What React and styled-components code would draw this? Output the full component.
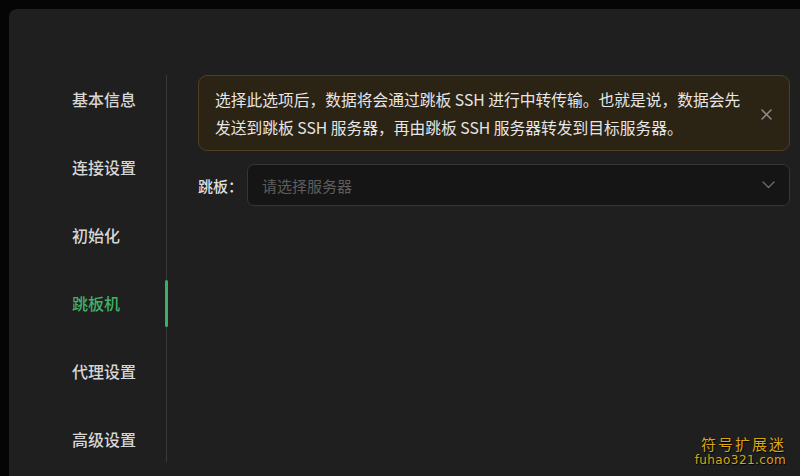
import React from "react";
import styled, { createGlobalStyle } from "styled-components";

const Global = createGlobalStyle`
  html, body { margin: 0; padding: 0; background: #050505; }
  body { font-family: "Noto Sans CJK SC", "Noto Sans", sans-serif; }
  * { box-sizing: border-box; }
`;

const Frame = styled.div`
  width: 800px;
  height: 476px;
  padding: 9px 0 0 9px;
  background: #050505;
  position: relative;
  overflow: hidden;
`;

const Panel = styled.div`
  height: 100%;
  background: #1f1f1f;
  border-top-left-radius: 8px;
  display: flex;
  align-items: flex-start;
  padding-top: 66px;
`;

const Nav = styled.nav`
  width: 158px;
  height: 387px;
  border-right: 1px solid #3a3a3a;
  display: flex;
  flex-direction: column;
  gap: 46px;
  padding: 13px 0 0 63px;
`;

const NavItem = styled.div`
  position: relative;
  height: 22px;
  line-height: 22px;
  font-size: 16px;
  font-weight: 500;
  color: ${(p) => (p.$active ? "#41b06a" : "#d6d6d6")};
  white-space: nowrap;
`;

const Indicator = styled.span`
  position: absolute;
  right: -2px;
  top: -12px;
  width: 3px;
  height: 47px;
  border-radius: 2px;
  background: #3fae68;
`;

const Content = styled.div`
  flex: 1;
  padding: 0 10px 0 31px;
  display: flex;
  flex-direction: column;
  gap: 13px;
`;

const Alert = styled.div`
  display: flex;
  align-items: center;
  background: #2b2314;
  border: 1px solid #4f3f20;
  border-radius: 9px;
  padding: 10px 14px 8px 16px;
`;

const AlertText = styled.div`
  flex: 1;
  font-size: 15.75px;
  line-height: 28px;
  color: #e6e6e6;
`;

const Line = styled.div`
  white-space: nowrap;
`;

const Close = styled.span`
  width: 18px;
  display: flex;
  justify-content: center;
  color: #8f8f8f;
  font-size: 18px;
  line-height: 1;
`;

const Row = styled.div`
  display: flex;
  align-items: center;
`;

const Label = styled.label`
  width: 49px;
  font-size: 15px;
  font-weight: 500;
  color: #dedede;
  white-space: nowrap;
`;

const Select = styled.div`
  flex: 1;
  height: 42px;
  background: #151515;
  border: 1px solid #363636;
  border-radius: 7px;
  display: flex;
  align-items: center;
  justify-content: space-between;
  padding: 0 14px 0 14px;
`;

const Placeholder = styled.span`
  font-size: 15px;
  color: #5e5e5e;
`;

const Watermark = styled.div`
  position: absolute;
  right: 14px;
  bottom: 8px;
  display: flex;
  flex-direction: column;
  align-items: flex-end;
  color: #d9a514;
  text-shadow: 1px 1px 1px #000;
`;

const WmTitle = styled.div`
  font-size: 15px;
  line-height: 18px;
  letter-spacing: 2px;
`;

const WmUrl = styled.div`
  font-family: "DejaVu Sans", sans-serif;
  font-size: 12px;
  line-height: 15px;
  letter-spacing: 0.4px;
`;

const items = ["基本信息", "连接设置", "初始化", "跳板机", "代理设置", "高级设置"];

export default function App() {
  return (
    <Frame>
      <Global />
      <Panel>
        <Nav>
          {items.map((t) => (
            <NavItem key={t} $active={t === "跳板机"}>
              {t}
              {t === "跳板机" && <Indicator />}
            </NavItem>
          ))}
        </Nav>
        <Content>
          <Alert>
            <AlertText>
              <Line>选择此选项后，数据将会通过跳板 SSH 进行中转传输。也就是说，数据会先</Line>
              <Line>发送到跳板 SSH 服务器，再由跳板 SSH 服务器转发到目标服务器。</Line>
            </AlertText>
            <Close>
              <svg width="11" height="11" viewBox="0 0 11 11">
                <path d="M1 1L10 10M10 1L1 10" stroke="#8f8f8f" strokeWidth="1.5" strokeLinecap="round" />
              </svg>
            </Close>
          </Alert>
          <Row>
            <Label>跳板：</Label>
            <Select>
              <Placeholder>请选择服务器</Placeholder>
              <svg width="13" height="8" viewBox="0 0 13 8">
                <path d="M1 1L6.5 6.5L12 1" fill="none" stroke="#6a6a6a" strokeWidth="1.4" strokeLinecap="round" strokeLinejoin="round" />
              </svg>
            </Select>
          </Row>
        </Content>
      </Panel>
      <Watermark>
        <WmTitle>符号扩展迷</WmTitle>
        <WmUrl>fuhao321.com</WmUrl>
      </Watermark>
    </Frame>
  );
}
